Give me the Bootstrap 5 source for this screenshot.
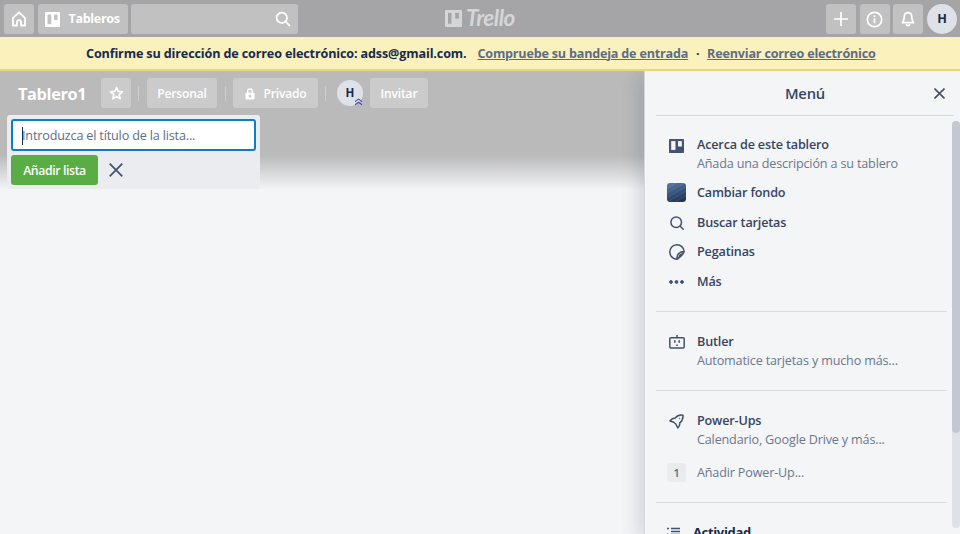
<!DOCTYPE html>
<html lang="es">
<head>
<meta charset="utf-8">
<meta name="viewport" content="width=device-width, initial-scale=1">
<title>Tablero1 | Trello</title>
<link href="https://cdn.jsdelivr.net/npm/bootstrap@5.3.0/dist/css/bootstrap.min.css" rel="stylesheet">
<style>
body{font-family:"Open Sans","Noto Sans",sans-serif;font-size:12.6px;line-height:18px;color:#172b4d;background:#f4f5f7;height:534px;letter-spacing:-.16px}
svg{display:block;flex:none;fill:none;stroke:currentColor}
.topbar{height:37px;background:#a5a5a7;padding:4px 3px 3px 4px;gap:3.5px}
.tile{height:30px;border:0;border-radius:3px;background:#c1c1c1;color:#fff;padding:0;font-size:inherit;line-height:18px;letter-spacing:inherit}
.sq{width:30px}
.boards-btn{width:90px;font-weight:700;padding-left:7px;gap:9px;letter-spacing:-.35px}
.search-box{width:167px;padding-right:7px}
.face{background:#dfe1e9;color:#172b4d;font-weight:700;letter-spacing:0}
.brand{color:#d4d6d7;left:445px;top:7px;gap:4px}
.brand-word{font:italic 700 22.5px/22px "Lato","Open Sans",sans-serif;letter-spacing:-.5px}
.notice{height:34px;background:#faf1bd;border-bottom:2px solid #ecd968;font-weight:700;padding:1px 0 0 86px;white-space:nowrap}
.n-a{letter-spacing:-.14px}
.notice a{color:#5e6c84;text-decoration:underline;letter-spacing:-.2px}
.board{width:645px;background:linear-gradient(#bababb 0,#bababb 84px,#f4f5f7 119px)}
.board-head{height:44px;padding:7px 0 0 18px}
.board-title{font-size:16.3px;font-weight:700;color:#fff;width:83px;letter-spacing:-.35px;padding-top:1px}
.board .board-head .tile{background:#cbcbcb;font-weight:600;font-size:12px}
.rule-v{width:1px;height:15px;background:#cecece}
.list-form{width:253px;height:74px;margin-left:7px;background:#ebecf0;border-radius:3px;padding:4px}
.list-input{height:33px;width:245px;border:2px solid #0c7fc0;border-radius:3px;background:#fff;padding:1px 9px 0;color:#5e6c84}
.caret{width:1px;height:18px;background:#172b4d;margin-right:-1px}
.add-btn{width:87px;height:30px;background:#5aac44;color:#fff;border:0;border-radius:3px;padding:2px 0 0;font-size:12.3px;font-weight:600;line-height:18px;letter-spacing:-.4px}
.side{width:315px;background:#f4f5f7;box-shadow:0 0 0 1px #d5d9de,-6px 4px 18px rgba(9,30,66,.16);clip-path:inset(0 0 0 -30px);color:#344563}
.side-head{height:45px;margin:0 6px 0 11px;border-bottom:1px solid #d6dadf}
.side-title{font-size:14.8px;font-weight:600;letter-spacing:-.2px}
.side-body{width:302px;padding-left:11px}
.block{border-bottom:1px solid #d9dde2;margin:0;padding:0 0 0 11px;width:291px}
.entry{gap:11px;min-height:29.7px}
.ico{width:19px;height:19px;color:#42526e}
.label-strong{font-weight:600}
.sub{color:#6b778c;display:block;padding-top:1px}
.thumb{width:19px;height:19px;border-radius:3px;background:repeating-linear-gradient(150deg,rgba(255,255,255,.08) 0 1px,transparent 1px 4px),linear-gradient(160deg,#5d7ba4,#34527b 50%,#1b2d4b)}
.count{width:19px;height:19px;border-radius:3px;background:#e9ebee;color:#5e6c84;font-size:11px;font-weight:600}
.track{width:8px;height:407px;margin-top:50px;border-radius:4px;background:#dfe1e8}
.grip{height:312px;border-radius:4px;background:#c2c7d1}
</style>
<script src="https://cdn.jsdelivr.net/npm/bootstrap@5.3.0/dist/js/bootstrap.bundle.min.js"></script>
</head>
<body class="d-flex flex-column overflow-hidden">
<header class="topbar d-flex position-relative flex-shrink-0">
  <button class="tile sq d-flex align-items-center justify-content-center" aria-label="Inicio"><svg width="16" height="16" viewBox="0 0 16 16" stroke-width="1.8" stroke-linejoin="round"><path d="M1.300 7.600 8 1.300l6.700 6.300M2 7v7.500h4v-3.400a2 2 0 0 1 4 0v3.400h4V7"/></svg></button>
  <button class="tile boards-btn d-flex align-items-center"><svg width="15" height="15" viewBox="0 0 15 15" stroke="none"><path fill="currentColor" fill-rule="evenodd" d="M2 0h11q2 0 2 2v11q0 2-2 2H2q-2 0-2-2V2Q0 0 2 0zM2 2v10.800h4.800V2zM8.700 2v6.600H13V2z"/></svg><span>Tableros</span></button>
  <div class="tile search-box d-flex align-items-center justify-content-end"><svg width="16" height="16" viewBox="0 0 16 16" stroke-width="1.8"><circle cx="6.800" cy="6.800" r="5.200"/><path d="m10.600 10.600 4.300 4.300"/></svg></div>
  <div class="brand position-absolute d-flex align-items-center"><svg width="17" height="17" viewBox="0 0 17 17" stroke="none"><path fill="currentColor" fill-rule="evenodd" d="M2 0h13q2 0 2 2v13q0 2-2 2H2q-2 0-2-2V2Q0 0 2 0zM2.500 2.300v11.900H7V2.300zM9.700 2.300v6.800h4.700V2.300z"/></svg><span class="brand-word">Trello</span></div>
  <div class="d-flex ms-auto" style="gap:3.6px">
    <button class="tile sq d-flex align-items-center justify-content-center" aria-label="Crear"><svg width="14" height="14" viewBox="0 0 14 14" stroke-width="1.700"><path d="M7 0v14M0 7h14"/></svg></button>
    <button class="tile sq d-flex align-items-center justify-content-center" aria-label="Información"><svg width="17" height="17" viewBox="0 0 17 17" stroke-width="1.700"><circle cx="8.500" cy="8.500" r="7.200"/><path d="M8.500 7.300v5M8.500 4.300v1.800"/></svg></button>
    <button class="tile sq d-flex align-items-center justify-content-center" aria-label="Avisos"><svg width="14" height="16" viewBox="0 0 14 16" stroke-width="1.700" stroke-linejoin="round"><path d="M1.400 11.600c1.800-1.600 1.500-3.200 1.800-6C3.500 3 5 1.700 7 1.700S10.500 3 10.800 5.600c.3 2.800 0 4.400 1.800 6zM5.200 13.300c.4 1.800 3.200 1.800 3.600 0"/></svg></button>
    <div class="face sq rounded-circle d-flex align-items-center justify-content-center" style="height:30px">H</div>
  </div>
</header>
<div class="notice d-flex align-items-center flex-shrink-0"><span class="n-a">Confirme su dirección de correo electrónico: adss@gmail.com.</span><a href="#" style="margin-left:11px">Compruebe su bandeja de entrada</a><span class="text-center" style="width:19px">·</span><a href="#">Reenviar correo electrónico</a></div>
<main class="d-flex flex-grow-1 overflow-hidden">
  <section class="board flex-shrink-0">
    <div class="board-head d-flex align-items-start">
      <div class="board-title d-flex align-items-center" style="height:30px">Tablero1</div>
      <button class="tile sq d-flex align-items-center justify-content-center" aria-label="Favorito"><svg width="15" height="15" viewBox="0 0 15 15" stroke-width="1.600" stroke-linejoin="round"><path d="m7.500 1.500 1.700 3.900 4.200.4-3.200 2.800 1 4.200-3.700-2.300-3.700 2.300 1-4.200L1.600 5.800l4.200-.4z"/></svg></button>
      <i class="rule-v mt-2" style="margin:0 8px 0 7px"></i>
      <button class="tile" style="width:70px;padding-top:1px">Personal</button>
      <i class="rule-v mt-2" style="margin:0 7px 0 8px"></i>
      <button class="tile d-flex align-items-center justify-content-center" style="width:85px;gap:9px;padding-top:1px"><svg width="10" height="12" viewBox="0 0 11 13"><path d="M3 6V3.500a2.500 2.500 0 0 1 5 0V6" stroke-width="1.600"/><rect x=".5" y="5" width="10" height="7.500" rx="1.200" fill="currentColor" stroke="none"/><path stroke="#bababb" d="M5.500 7.200v3.200M3.900 8.800h3.200"/></svg><span>Privado</span></button>
      <i class="rule-v mt-2" style="margin:0 11px 0 7px"></i>
      <div class="position-relative" style="margin:2px 7px 0 0"><div class="face rounded-circle d-flex align-items-center justify-content-center" style="width:26px;height:26px;font-size:11.500px">H</div>
        <svg class="position-absolute bottom-0 end-0" width="9" height="8" viewBox="0 0 9 8" style="color:#4546b8"><path d="m1 3.600 3.500-2.500L8 3.600M1 6.700l3.500-2.500L8 6.700" stroke-width="1.100"/></svg></div>
      <button class="tile" style="width:58px;padding-top:1px">Invitar</button>
    </div>
    <div class="list-form d-flex flex-column gap-1">
      <div class="list-input d-flex align-items-center"><i class="caret"></i><span>Introduzca el título de la lista...</span></div>
      <div class="d-flex align-items-center"><button class="add-btn">Añadir lista</button><svg width="14" height="14" viewBox="0 0 14 14" stroke-width="1.700" style="margin-left:11px;color:#42526e"><path d="m.7.700 12.600 12.600M13.300.700.700 13.300"/></svg></div>
    </div>
  </section>
  <aside class="side d-flex flex-column flex-shrink-0 position-relative">
    <div class="side-head d-flex align-items-center position-relative justify-content-center flex-shrink-0"><span class="side-title">Menú</span><svg class="position-absolute" width="11" height="11" viewBox="0 0 11 11" stroke-width="1.600" style="right:9px;top:17px;color:#42526e"><path d="m.5.500 10 10M10.500.500l-10 10"/></svg></div>
    <div class="side-body flex-shrink-0">
      <div class="block" style="height:196px;padding-top:20px">
        <div class="entry d-flex" style="height:42px"><div class="ico d-flex align-items-center justify-content-center"><svg width="15" height="14" viewBox="0 0 15 14" stroke="none"><path fill="currentColor" fill-rule="evenodd" d="M2 0h11q2 0 2 2v10q0 2-2 2H2q-2 0-2-2V2Q0 0 2 0zM1.700 1.600v9.800H7V1.600zM8.500 1.600V8h4.800V1.600z"/></svg></div><div><span class="label-strong">Acerca de este tablero</span><span class="sub">Añada una descripción a su tablero</span></div></div>
        <div class="entry d-flex align-items-center"><div class="thumb"></div><span class="label-strong">Cambiar fondo</span></div>
        <div class="entry d-flex align-items-center"><div class="ico d-flex align-items-center justify-content-center"><svg width="14" height="14" viewBox="0 0 14 14" stroke-width="1.500"><circle cx="6.200" cy="6.200" r="5.300"/><path d="m10 10 3.600 3.600"/></svg></div><span class="label-strong">Buscar tarjetas</span></div>
        <div class="entry d-flex align-items-center"><div class="ico d-flex align-items-center justify-content-center"><svg width="16" height="16" viewBox="0 0 16 16" stroke-width="1.500" stroke-linejoin="round"><path d="M8 15.200A7.200 7.200 0 1 1 15.200 7.500Q13.500 12 8 15.200C7.600 10.500 10.500 7.500 15.200 7.500M8 15.200q2.600-.8 2.900-4.300 3.200-.2 4.300-3.400"/></svg></div><span class="label-strong">Pegatinas</span></div>
        <div class="entry d-flex align-items-center"><div class="ico d-flex align-items-center justify-content-center"><svg width="15" height="4" viewBox="0 0 15 4" stroke="none"><g fill="#42526e"><circle cx="2" cy="2" r="1.400"/><circle cx="7.500" cy="2" r="1.400"/><circle cx="13" cy="2" r="1.400"/></g></svg></div><span class="label-strong">Más</span></div>
      </div>
      <div class="block" style="height:79px;padding-top:21px">
        <div class="entry d-flex"><div class="ico d-flex align-items-center justify-content-center" style="height:17px"><svg width="16" height="14" viewBox="0 0 16 14" stroke-width="1.500"><rect x=".8" y="2.800" width="14.400" height="10.200" rx="1"/><path d="M8 0v2.800M5.800 5.200v2.600M10.200 5.200v2.600M7.200 10.200h1.600"/></svg></div><div><span class="label-strong">Butler</span><span class="sub">Automatice tarjetas y mucho más...</span></div></div>
      </div>
      <div class="block" style="height:112px;padding-top:21px">
        <div class="entry d-flex" style="height:46px"><div class="ico d-flex align-items-center justify-content-center"><svg width="15" height="15" viewBox="0 0 15 15" stroke-width="1.500" stroke-linejoin="round"><path d="M14 1.200C10.800.700 8 1.800 6.200 4.100 4 4.200 2.500 5 .9 7L4.800 8.200 7 10.200 8.800 14c1.500-1.600 2.200-3.200 2-5.200C13.200 6.900 14.200 4.300 14 1.200z"/><circle cx="10.500" cy="4.500" r=".3" stroke-width="1"/></svg></div><div><span class="label-strong">Power-Ups</span><span class="sub">Calendario, Google Drive y más...</span></div></div>
        <div class="entry d-flex align-items-center"><div class="count d-flex align-items-center justify-content-center">1</div><span class="sub">Añadir Power-Up...</span></div>
      </div>
      <div class="d-flex" style="padding:20px 0 0 11px;gap:11px"><svg width="15" height="15" viewBox="0 0 15 15" stroke-width="1.500" style="margin-top:4px;color:#42526e"><path d="M0 1.500h2M4 1.500h9M4 4.500h9M0 7.500h2M4 7.500h9"/></svg><span class="fw-bold" style="font-size:13px;color:#172b4d;letter-spacing:-.35px">Actividad</span></div>
    </div>
    <div class="track position-absolute top-0 end-0"><div class="grip"></div></div>
  </aside>
</main>
</body>
</html>
